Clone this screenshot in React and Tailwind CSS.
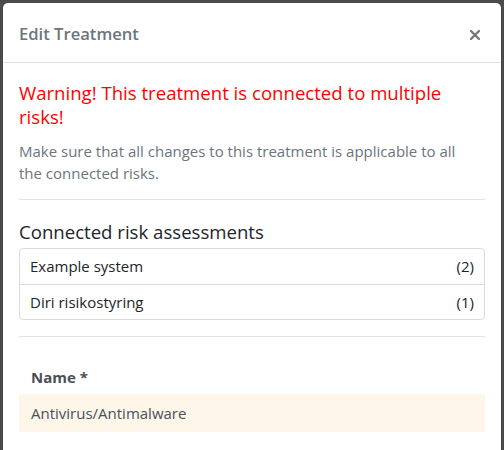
import React from 'react';
import { X } from 'lucide-react';

const risks = [
  { name: 'Example system', count: 2 },
  { name: 'Diri risikostyring', count: 1 },
];

const App = () => {
  return (
    <div className="h-[450px] w-[504px] overflow-hidden bg-[#4b4b4b] pt-[3px] px-[3px] font-['Open_Sans','Noto_Sans',sans-serif]">
      <div className="h-[460px] rounded-[5px] bg-white">
        {/* header */}
        <div className="flex h-[60px] items-center justify-between border-b border-[#e2e2e2] px-4 pt-[4px]">
          <h2 className="text-[16.6px] font-semibold text-[#6c757d]">Edit Treatment</h2>
          <X size={16} strokeWidth={3.5} className="mr-[2px] text-[#777]" />
        </div>

        {/* body */}
        <div className="px-4 pt-[18px]">
          <h3 className="text-[18.6px] leading-[24px] text-[#ff0000]">
            Warning! This treatment is connected to multiple risks!
          </h3>
          <p className="mt-[11px] max-w-[460px] text-[15px] leading-[22px] text-[#6c757d]">
            Make sure that all changes to this treatment is applicable to all the connected risks.
          </p>
          <hr className="mt-[15px] border-[#e2e2e2]" />

          <h3 className="mt-[20px] text-[18.6px] leading-[24px] text-[#212529]">Connected risk assessments</h3>
          <ul className="mt-[4px] rounded-[4px] border border-[#dcdcdc]">
            {risks.map((r, i) => (
              <li
                key={r.name}
                className={`flex h-[35px] items-center justify-between px-[10px] text-[15px] text-[#212529] ${i > 0 ? 'border-t border-[#dcdcdc]' : ''}`}
              >
                <span>{r.name}</span>
                <span>({r.count})</span>
              </li>
            ))}
          </ul>
          <hr className="mt-[16px] border-[#e2e2e2]" />

          <div className="mt-[29px]">
            <label className="block px-3 text-[15px] font-bold leading-[22px] text-[#495057]">Name *</label>
            <div className="mt-[6px] flex h-[38px] items-center bg-[#fff6ea] px-3 text-[15px] text-[#495057]">
              Antivirus/Antimalware
            </div>
          </div>
        </div>
      </div>
    </div>
  );
};

export default App;
